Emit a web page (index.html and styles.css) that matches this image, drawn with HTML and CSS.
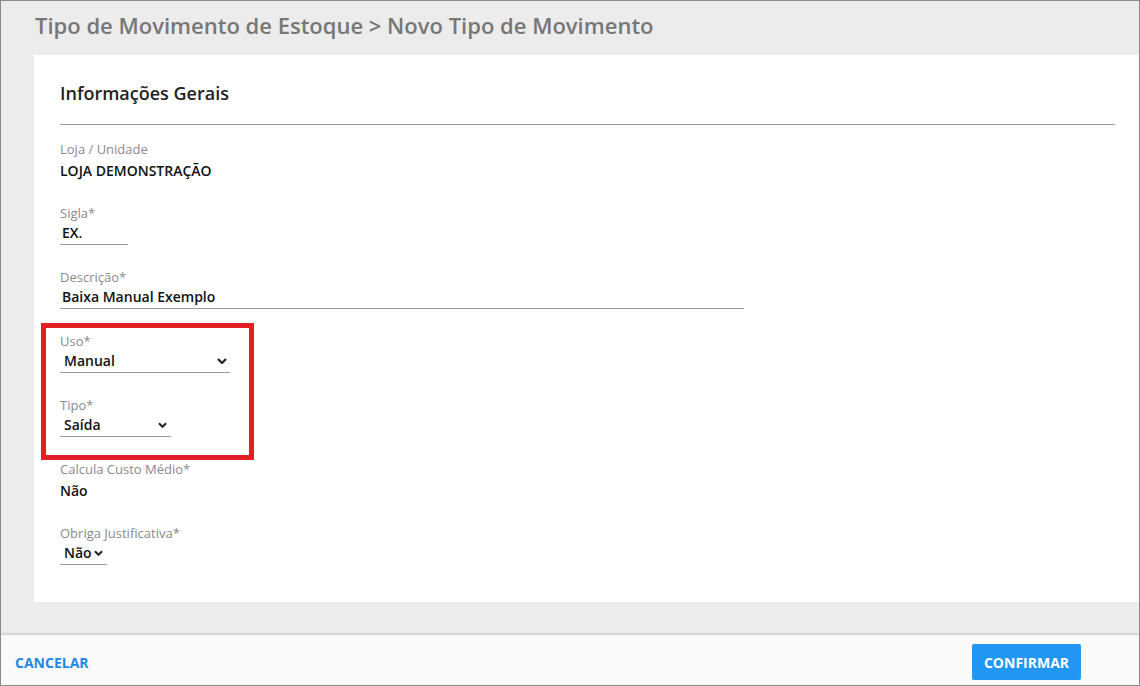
FILE: index.html
```html
<!DOCTYPE html>
<html lang="pt-BR">
<head>
<meta charset="utf-8">
<title>Novo Tipo de Movimento</title>
<link rel="stylesheet" href="styles.css">
</head>
<body>
<div class="frame">
  <header class="page-header">
    <h1 class="page-title">Tipo de Movimento de Estoque &gt; Novo Tipo de Movimento</h1>
  </header>
  <main class="content">
    <section class="card">
      <h2 class="section-title">Informações Gerais</h2>
      <hr class="divider">
      <div class="fields">
        <div class="field">
          <div class="label">Loja / Unidade</div>
          <div class="static">LOJA DEMONSTRAÇÃO</div>
        </div>
        <div class="field">
          <div class="label">Sigla*</div>
          <div class="input w-sigla">EX.</div>
        </div>
        <div class="field">
          <div class="label">Descrição*</div>
          <div class="input w-desc">Baixa Manual Exemplo</div>
        </div>
        <div class="field">
          <div class="label">Uso*</div>
          <div class="select w-uso"><span>Manual</span><svg class="chev" viewBox="0 0 10 6"><path d="M1 1l4 4 4-4" /></svg></div>
        </div>
        <div class="field">
          <div class="label">Tipo*</div>
          <div class="select w-tipo"><span>Saída</span><svg class="chev" viewBox="0 0 10 6"><path d="M1 1l4 4 4-4" /></svg></div>
        </div>
        <div class="field">
          <div class="label">Calcula Custo Médio*</div>
          <div class="static">Não</div>
        </div>
        <div class="field">
          <div class="label">Obriga Justificativa*</div>
          <div class="select w-obriga"><span>Não</span><svg class="chev" viewBox="0 0 10 6"><path d="M1 1l4 4 4-4" /></svg></div>
        </div>
      </div>
    </section>
  </main>
  <footer class="footer">
    <button class="btn-link">CANCELAR</button>
    <button class="btn-primary">CONFIRMAR</button>
  </footer>
  <div class="highlight"></div>
</div>
</body>
</html>
```
FILE: styles.css
```css
* { box-sizing: border-box; }
html, body { margin: 0; padding: 0; }
body {
  font-family: "Open Sans", "Noto Sans", "Liberation Sans", sans-serif;
  color: #222;
}
.frame {
  position: relative;
  width: 1140px;
  height: 686px;
  border: 1px solid #8a8a8a;
  background: #ececec;
  display: flex;
  flex-direction: column;
  overflow: hidden;
}
.page-header {
  height: 54px;
  padding: 9px 0 0 34px;
  flex: none;
}
.page-title {
  margin: 0;
  font-size: 22px;
  line-height: 30px;
  font-weight: 600;
  color: #777;
}
.content {
  flex: 1;
  padding: 0 0 33px 33px;
  display: flex;
}
.card {
  flex: 1;
  background: #fff;
  padding: 26px 24px 0 26px;
}
.section-title {
  margin: 0;
  font-size: 18px;
  line-height: 24px;
  font-weight: 600;
  color: #222;
}
.divider {
  margin: 19px 0 0 0;
  border: 0;
  height: 1px;
  background: #9a9a9a;
}
.fields {
  display: flex;
  flex-direction: column;
  gap: 22px;
  padding-top: 14px;
}
.field { display: flex; flex-direction: column; }
.label {
  font-size: 13px;
  line-height: 20px;
  color: #8a8a8a;
}
.static {
  font-size: 14px;
  line-height: 21px;
  font-weight: 600;
  color: #111;
  height: 22px;
  padding-top: 1px;
}
.input, .select {
  font-size: 14px;
  line-height: 20px;
  font-weight: 600;
  color: #111;
  border-bottom: 1px solid #9a9a9a;
  padding-bottom: 1px;
  height: 22px;
}
.input { padding-left: 2px; }
.select {
  display: flex;
  align-items: center;
  justify-content: space-between;
  padding-left: 4px;
  padding-right: 4px;
}
.chev {
  width: 9px;
  height: 6px;
  fill: none;
  stroke: #222;
  stroke-width: 2.2;
}
.w-sigla { width: 68px; }
.w-desc { width: 684px; }
.w-uso { width: 170px; padding-right: 3px; }
.w-uso .chev { width: 10px; }
.w-tipo { width: 111px; }
.w-obriga { width: 47px; }
.footer {
  height: 50px;
  flex: none;
  background: #fafafa;
  box-shadow: 0 -1px 3px rgba(0, 0, 0, 0.18);
  display: flex;
  justify-content: space-between;
  align-items: flex-start;
  padding: 9px 58px 0 14px;
  position: relative;
}
.btn-link {
  font-family: inherit;
  background: none;
  border: 0;
  padding: 0;
  height: 36px;
  font-size: 14px;
  font-weight: 700;
  color: #1e88e5;
}
.btn-primary {
  font-family: inherit;
  background: #2196f3;
  border: 0;
  border-radius: 2px;
  width: 109px;
  height: 36px;
  font-size: 14px;
  font-weight: 700;
  color: #fff;
}
.highlight {
  position: absolute;
  left: 40px;
  top: 322px;
  width: 213px;
  height: 137px;
  border: 5px solid #e31f26;
  pointer-events: none;
}
```
